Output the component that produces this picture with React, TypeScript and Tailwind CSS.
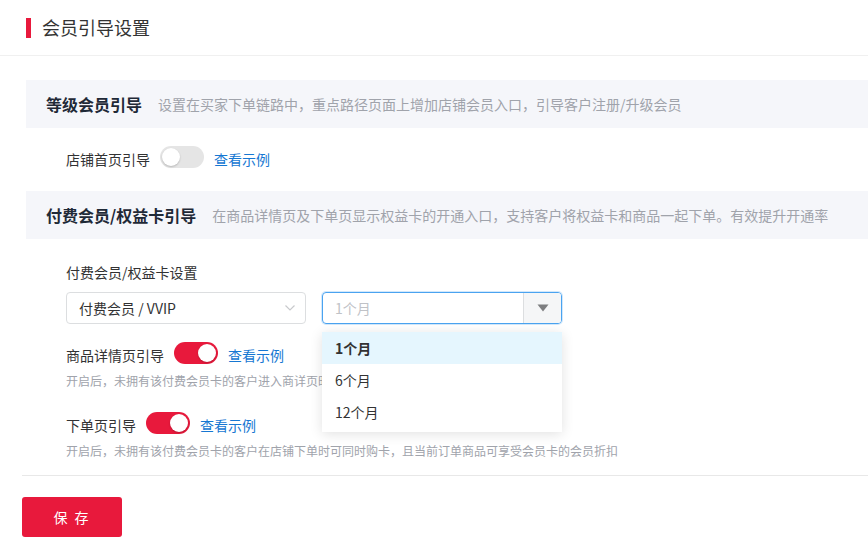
import React from "react";

const font = { fontFamily: '"Noto Sans CJK SC", "Noto Sans", sans-serif' };

function Toggle({ on }: { on?: boolean }) {
  return (
    <span
      className={`relative inline-flex h-[22px] w-[44px] shrink-0 items-center rounded-full ${
        on ? "bg-[#e8193c]" : "bg-[#e5e5e5]"
      }`}
    >
      <span
        className={`absolute top-[2px] size-[18px] rounded-full bg-white shadow-[0_1px_2px_rgba(0,0,0,0.2)] ${
          on ? "left-[24px]" : "left-[2px]"
        }`}
      />
    </span>
  );
}

function Band({ title, desc }: { title: string; desc: string }) {
  return (
    <div className="ml-[4px] flex h-[48px] items-center bg-[#f5f6fa] pl-[20px]">
      <span className="text-[16px] font-bold text-[#1f2937]">{title}</span>
      <span className="ml-[16px] text-[14px] text-[#a0a3ab]">{desc}</span>
    </div>
  );
}

export default function App() {
  return (
    <div className="h-[560px] w-[868px] overflow-hidden bg-white text-[14px] text-[#323233]" style={font}>
      <div className="flex h-[56px] items-center border-b border-[#f0f0f0] pl-[26px]">
        <span className="h-[20px] w-[5px] bg-[#e8193c]" />
        <span className="ml-[11px] text-[18px] text-[#333]">会员引导设置</span>
      </div>

      <div className="pl-[22px] pt-[24px]">
        <Band
          title="等级会员引导"
          desc="设置在买家下单链路中，重点路径页面上增加店铺会员入口，引导客户注册/升级会员"
        />
        <div className="flex h-[63px] items-center pl-[44px]">
          <span>店铺首页引导</span>
          <span className="ml-[10px]">
            <Toggle />
          </span>
          <span className="ml-[10px] text-[#1677d2]">查看示例</span>
        </div>

        <Band
          title="付费会员/权益卡引导"
          desc="在商品详情页及下单页显示权益卡的开通入口，支持客户将权益卡和商品一起下单。有效提升开通率"
        />

        <div className="pl-[44px] pt-[22px]">
          <div className="leading-[22px]">付费会员/权益卡设置</div>
          <div className="mt-[9px] flex gap-[16px]">
            <div className="flex h-[32px] w-[240px] items-center justify-between rounded-[4px] border border-[#dcdee0] pl-[12px] pr-[8px]">
              <span>付费会员 / VVIP</span>
              <svg width="14" height="14" viewBox="0 0 14 14" fill="none" stroke="#c8c9cc" strokeWidth="1.2">
                <path d="M2.5 4.5 7 9l4.5-4.5" />
              </svg>
            </div>
            <div className="relative">
              <div className="flex h-[32px] w-[240px] items-stretch overflow-hidden rounded-[4px] border border-[#4aa3f0] shadow-[0_0_0_1px_rgba(74,163,240,0.25)]">
                <span className="flex flex-1 items-center pl-[12px] text-[#c0c2c7]">1个月</span>
                <span className="flex w-[38px] items-center justify-center border-l border-[#dcdee0] bg-[#f5f6f7]">
                  <svg width="12" height="8" viewBox="0 0 12 8">
                    <path d="M0.5 0.5h11L6 7.5z" fill="#7d7e80" />
                  </svg>
                </span>
              </div>
              <div className="absolute left-0 top-[40px] z-10 w-[240px] bg-white pb-[4px] shadow-[0_2px_12px_rgba(0,0,0,0.12)]">
                <div className="flex h-[32px] items-center bg-[#e5f6fe] pl-[13px] font-bold text-[#323233]">1个月</div>
                <div className="flex h-[32px] items-center pl-[13px]">6个月</div>
                <div className="flex h-[32px] items-center pl-[13px]">12个月</div>
              </div>
            </div>
          </div>

          <div className="mt-[19px] flex h-[24px] items-center">
            <span>商品详情页引导</span>
            <span className="ml-[10px]">
              <Toggle on />
            </span>
            <span className="ml-[10px] text-[#1677d2]">查看示例</span>
          </div>
          <div className="mt-[4px] text-[12px] leading-[20px] text-[#a0a3ab]">
            开启后，未拥有该付费会员卡的客户进入商详页时可同时购卡
          </div>

          <div className="mt-[22px] flex h-[24px] items-center">
            <span>下单页引导</span>
            <span className="ml-[10px]">
              <Toggle on />
            </span>
            <span className="ml-[10px] text-[#1677d2]">查看示例</span>
          </div>
          <div className="mt-[4px] text-[12px] leading-[20px] text-[#a0a3ab]">
            开启后，未拥有该付费会员卡的客户在店铺下单时可同时购卡，且当前订单商品可享受会员卡的会员折扣
          </div>
        </div>

        <div className="mt-[14px] border-t border-[#e8e8e8]" />
        <button className="mt-[21px] h-[40px] w-[100px] rounded-[3px] bg-[#e8193c] text-[14px] tracking-[2px] text-white">
          保 存
        </button>
      </div>
    </div>
  );
}
